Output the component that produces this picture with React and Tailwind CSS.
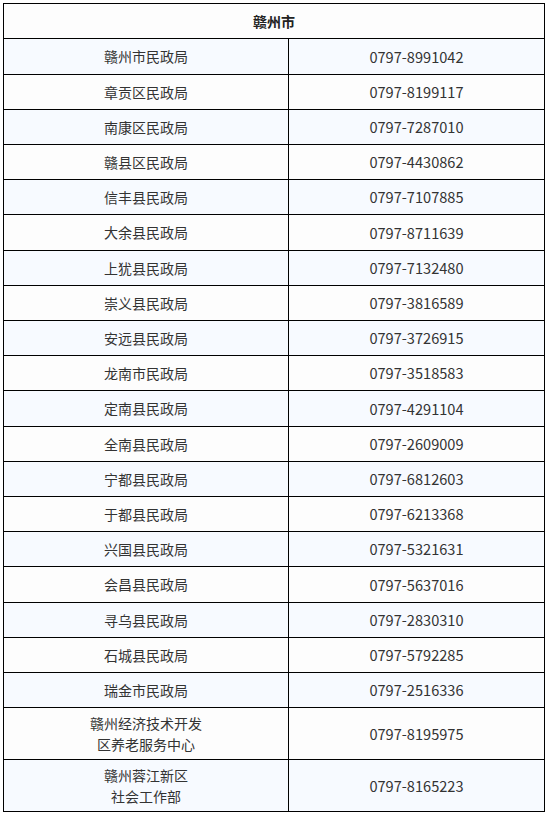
import React from "react";

const rows = [
  ["赣州市民政局", "0797-8991042", "h-[36px]"],
  ["章贡区民政局", "0797-8199117", "h-[35px]"],
  ["南康区民政局", "0797-7287010", "h-[35px]"],
  ["赣县区民政局", "0797-4430862", "h-[35px]"],
  ["信丰县民政局", "0797-7107885", "h-[35px]"],
  ["大余县民政局", "0797-8711639", "h-[36px]"],
  ["上犹县民政局", "0797-7132480", "h-[35px]"],
  ["崇义县民政局", "0797-3816589", "h-[35px]"],
  ["安远县民政局", "0797-3726915", "h-[35px]"],
  ["龙南市民政局", "0797-3518583", "h-[35px]"],
  ["定南县民政局", "0797-4291104", "h-[36px]"],
  ["全南县民政局", "0797-2609009", "h-[35px]"],
  ["宁都县民政局", "0797-6812603", "h-[35px]"],
  ["于都县民政局", "0797-6213368", "h-[35px]"],
  ["兴国县民政局", "0797-5321631", "h-[35px]"],
  ["会昌县民政局", "0797-5637016", "h-[36px]"],
  ["寻乌县民政局", "0797-2830310", "h-[35px]"],
  ["石城县民政局", "0797-5792285", "h-[35px]"],
  ["瑞金市民政局", "0797-2516336", "h-[35px]"],
  [["赣州经济技术开发", "区养老服务中心"], "0797-8195975", "h-[52px]"],
  [["赣州蓉江新区", "社会工作部"], "0797-8165223", "h-[51px]"],
];

export default function App() {
  return (
    <div
      className="bg-white w-[547px] h-[813px] pt-[3px] pl-[3px] text-[14px] text-[#333]"
      style={{ fontFamily: '"Noto Sans CJK SC", "Noto Sans", sans-serif' }}
    >
      <div className="w-[542px] border border-black flex flex-col">
        <div className="h-[35px] border-b border-black bg-[#fdfdfd] flex items-center justify-center font-bold text-[#222]">
          赣州市
        </div>
        {rows.map(([name, phone, h], i) => {
          const last = i === rows.length - 1;
          const bg = i % 2 === 0 ? "bg-[#f7faff]" : "bg-[#fdfdfd]";
          return (
            <div
              key={i}
              className={`${h} ${bg} ${last ? "" : "border-b border-black"} flex`}
            >
              <div className="w-[285px] border-r border-black flex flex-col items-center justify-center leading-[21px]">
                {Array.isArray(name) ? name.map((n, j) => <div key={j}>{n}</div>) : name}
              </div>
              <div className="flex-1 flex items-center justify-center text-[14.6px]">{phone}</div>
            </div>
          );
        })}
      </div>
    </div>
  );
}
